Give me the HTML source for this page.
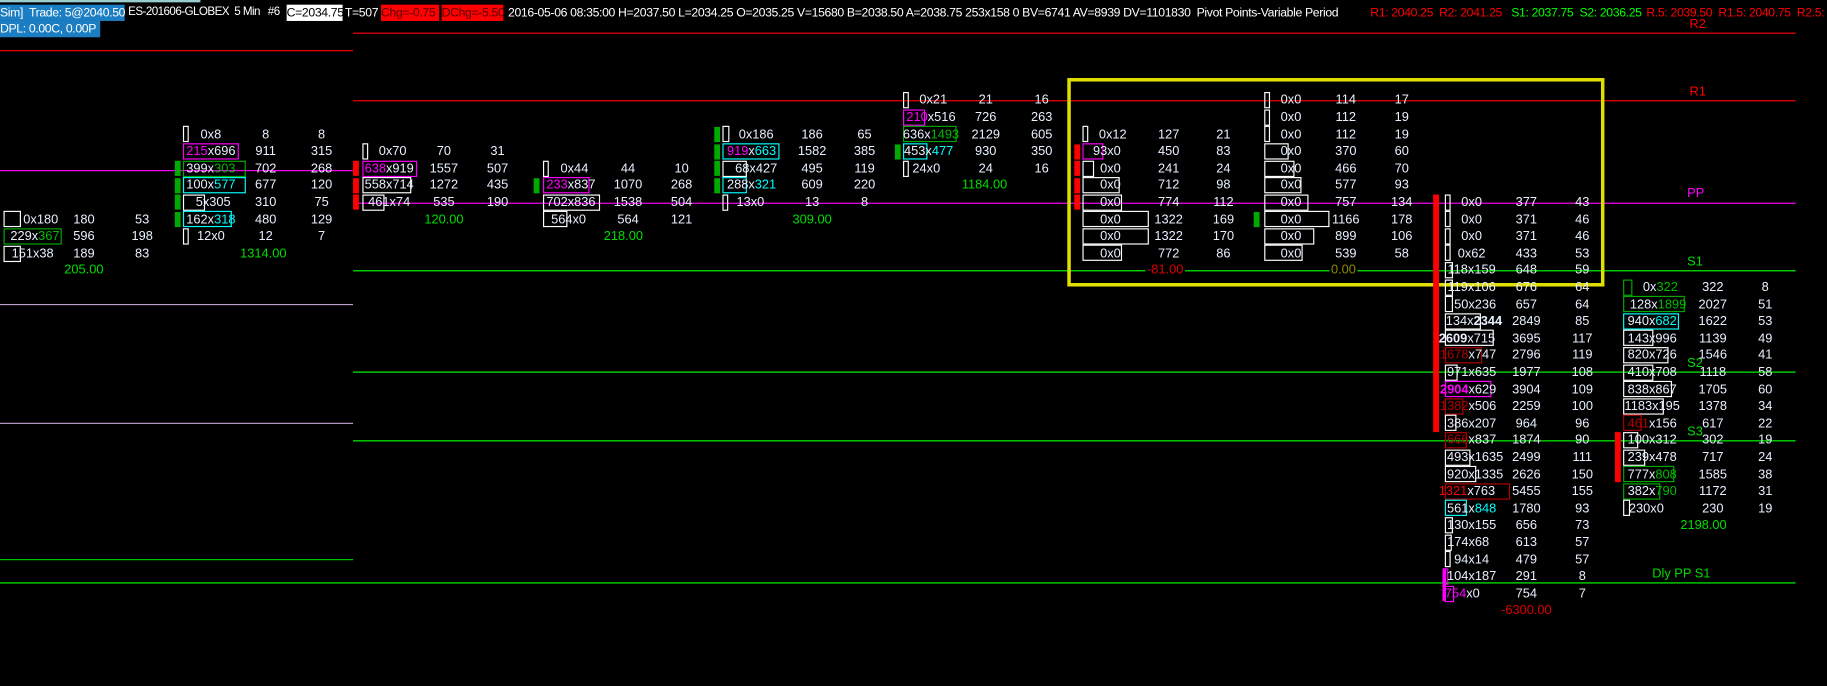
<!DOCTYPE html>
<html><head><meta charset="utf-8"><style>
html,body{margin:0;padding:0;background:#000;overflow:hidden;width:1827px;height:686px}
#s{position:absolute;left:0;top:0;width:1568px;height:589px;transform-origin:0 0;transform:scale(1.16518,1.16469);font-family:"Liberation Sans",sans-serif;font-size:11px;color:#fff}
#s div{position:absolute}
.h{top:4px;height:14px;line-height:14px;white-space:nowrap;font-size:10.5px;letter-spacing:-0.3px}
.l{height:1px}
.t{width:70px;margin-left:-35px;text-align:center;line-height:14px;height:14px;white-space:nowrap;color:#e8f0ff}
.b{height:12px;border:1px solid #fff;box-sizing:content-box}
.w{border-color:#fff}.m{border-color:#f0f}.c{border-color:#0ff}.g{border-color:#0a0}.r{border-color:#b00000}
.vr{width:5px;height:13px;background:#f00}.vg{width:5px;height:13px;background:#0a0}.vm{width:3px;height:13px;background:#f0f}
.M{color:#f0f}.C{color:#0ff}.G{color:#0b0}.R{color:#b00000}.RR{color:#f00}
.tot{color:#0d0}.lab{font-size:11px;line-height:12px}
</style></head><body><div id="s">
<div style="left:0;top:0;width:172px;height:2px;background:#9cc"></div>
<div class="h" style="left:0;width:107px;background:#1b7ec2">Sim]&nbsp; Trade: 5@2040.50</div>
<div class="h" style="left:110px;font-size:10px;letter-spacing:-0.5px">ES-201606-GLOBEX&nbsp; 5 Min&nbsp;&nbsp; #6</div>
<div class="h" style="left:246px;width:48px;background:#fff;color:#000">C=2034.75</div>
<div class="h" style="left:296px">T=507</div>
<div class="h" style="left:327px;width:50px;background:#f00;color:#500">Chg=-0.75</div>
<div class="h" style="left:379px;width:53px;background:#f00;color:#500">DChg=-5.50</div>
<div class="h" style="left:436px">2016-05-06 08:35:00 H=2037.50 L=2034.25 O=2035.25 V=15680 B=2038.50 A=2038.75 253x158 0 BV=6741 AV=8939 DV=1101830&nbsp; Pivot Points-Variable Period</div>
<div class="h" style="left:1176px;color:#f00">R1: 2040.25&nbsp; R2: 2041.25</div>
<div class="h" style="left:1297px;color:#0f0">S1: 2037.75&nbsp; S2: 2036.25</div>
<div class="h" style="left:1413px;color:#f00">R.5: 2039.50&nbsp; R1.5: 2040.75&nbsp; R2.5: 2042.00&nbsp; R3: 20</div>
<div class="h" style="left:0;top:18px;width:86px;background:#1b7ec2">DPL: 0.00C, 0.00P</div>

<div class="l" style="left:0;top:43px;width:303px;background:#f00"></div>
<div class="l" style="left:303px;top:28px;width:1238px;background:#f00"></div>
<div class="l" style="left:0;top:146px;width:303px;background:#f0f"></div>
<div class="l" style="left:0;top:261px;width:303px;background:#b8a0c8"></div>
<div class="l" style="left:0;top:363px;width:303px;background:#b8a0c8"></div>
<div class="l" style="left:0;top:480px;width:303px;background:#0c0"></div>
<div class="l" style="left:303px;top:86px;width:1238px;background:#f00"></div>
<div class="l" style="left:303px;top:174px;width:1238px;background:#f0f"></div>
<div class="l" style="left:303px;top:232px;width:1238px;background:#0f0"></div>
<div class="l" style="left:303px;top:319px;width:1238px;background:#0f0"></div>
<div class="l" style="left:303px;top:378px;width:1238px;background:#0f0"></div>
<div class="l" style="left:0;top:500px;width:1541px;background:#0f0"></div>
<div class="lab" style="left:1450px;top:15px;color:#f00">R2</div>
<div class="lab" style="left:1450px;top:73px;color:#f00">R1</div>
<div class="lab" style="left:1448px;top:160px;color:#f0f">PP</div>
<div class="lab" style="left:1448px;top:219px;color:#0d0">S1</div>
<div class="lab" style="left:1448px;top:306px;color:#0d0">S2</div>
<div class="lab" style="left:1448px;top:365px;color:#0d0">S3</div>
<div class="lab" style="left:1418px;top:487px;color:#0d0">Dly PP S1</div>
<div style="left:916px;top:67px;width:455px;height:173px;border:3px solid #e0e000"></div>

<!-- Bar A -->
<div class="b w" style="left:3px;top:181px;width:13px"></div>
<div class="b g" style="left:3px;top:196px;width:48px"></div>
<div class="b w" style="left:3px;top:211px;width:13px"></div>
<div class="t" style="left:35px;top:181.6px">0x180</div><div class="t" style="left:72px;top:181.6px">180</div><div class="t" style="left:122px;top:181.6px">53</div>
<div class="t" style="left:30px;top:196.2px">229x<span class="G">367</span></div><div class="t" style="left:72px;top:196.2px">596</div><div class="t" style="left:122px;top:196.2px">198</div>
<div class="t" style="left:28px;top:210.8px">151x38</div><div class="t" style="left:72px;top:210.8px">189</div><div class="t" style="left:122px;top:210.8px">83</div>
<div class="t tot" style="left:72px;top:225.4px">205.00</div>

<!-- Bar B -->
<div class="vg" style="left:150px;top:138px"></div><div class="vg" style="left:150px;top:153px"></div><div class="vg" style="left:150px;top:167px"></div><div class="vg" style="left:150px;top:182px"></div>
<div class="b w" style="left:157px;top:108px;width:3px"></div>
<div class="b m" style="left:157px;top:123px;width:46px"></div>
<div class="b g" style="left:157px;top:138px;width:52px"></div>
<div class="b c" style="left:157px;top:152px;width:52px"></div>
<div class="b w" style="left:157px;top:167px;width:17px"></div>
<div class="b c" style="left:157px;top:181px;width:40px"></div>
<div class="b w" style="left:157px;top:196px;width:3px"></div>
<div class="t" style="left:181px;top:108.6px">0x8</div><div class="t" style="left:228px;top:108.6px">8</div><div class="t" style="left:276px;top:108.6px">8</div>
<div class="t" style="left:181px;top:123.2px"><span class="M">215</span>x696</div><div class="t" style="left:228px;top:123.2px">911</div><div class="t" style="left:276px;top:123.2px">315</div>
<div class="t" style="left:181px;top:137.8px">399x<span class="G">303</span></div><div class="t" style="left:228px;top:137.8px">702</div><div class="t" style="left:276px;top:137.8px">268</div>
<div class="t" style="left:181px;top:152.4px">100x<span class="C">577</span></div><div class="t" style="left:228px;top:152.4px">677</div><div class="t" style="left:276px;top:152.4px">120</div>
<div class="t" style="left:183px;top:167px">5x305</div><div class="t" style="left:228px;top:167px">310</div><div class="t" style="left:276px;top:167px">75</div>
<div class="t" style="left:181px;top:181.6px">162x<span class="C">318</span></div><div class="t" style="left:228px;top:181.6px">480</div><div class="t" style="left:276px;top:181.6px">129</div>
<div class="t" style="left:181px;top:196.2px">12x0</div><div class="t" style="left:228px;top:196.2px">12</div><div class="t" style="left:276px;top:196.2px">7</div>
<div class="t tot" style="left:226px;top:210.8px">1314.00</div>

<!-- Bar C -->
<div class="vr" style="left:303px;top:138px"></div><div class="vr" style="left:303px;top:153px"></div><div class="vr" style="left:303px;top:167px"></div>
<div class="b w" style="left:311px;top:123px;width:3px"></div>
<div class="b m" style="left:311px;top:138px;width:45px"></div>
<div class="b w" style="left:311px;top:152px;width:40px"></div>
<div class="b w" style="left:311px;top:167px;width:17px"></div>
<div class="t" style="left:337px;top:123.2px">0x70</div><div class="t" style="left:381px;top:123.2px">70</div><div class="t" style="left:427px;top:123.2px">31</div>
<div class="t" style="left:334px;top:137.8px"><span class="M">638</span>x919</div><div class="t" style="left:381px;top:137.8px">1557</div><div class="t" style="left:427px;top:137.8px">507</div>
<div class="t" style="left:334px;top:152.4px">558x714</div><div class="t" style="left:381px;top:152.4px">1272</div><div class="t" style="left:427px;top:152.4px">435</div>
<div class="t" style="left:334px;top:167px">461x74</div><div class="t" style="left:381px;top:167px">535</div><div class="t" style="left:427px;top:167px">190</div>
<div class="t tot" style="left:381px;top:181.6px">120.00</div>

<!-- Bar D -->
<div class="vg" style="left:458px;top:153px"></div>
<div class="b w" style="left:466px;top:138px;width:3px"></div>
<div class="b m" style="left:466px;top:152px;width:38px"></div>
<div class="b w" style="left:466px;top:167px;width:47px"></div>
<div class="b w" style="left:466px;top:181px;width:19px"></div>
<div class="t" style="left:493px;top:137.8px">0x44</div><div class="t" style="left:539px;top:137.8px">44</div><div class="t" style="left:585px;top:137.8px">10</div>
<div class="t" style="left:490px;top:152.4px"><span class="M">233</span>x837</div><div class="t" style="left:539px;top:152.4px">1070</div><div class="t" style="left:585px;top:152.4px">268</div>
<div class="t" style="left:490px;top:167px">702x836</div><div class="t" style="left:539px;top:167px">1538</div><div class="t" style="left:585px;top:167px">504</div>
<div class="t" style="left:488px;top:181.6px">564x0</div><div class="t" style="left:539px;top:181.6px">564</div><div class="t" style="left:585px;top:181.6px">121</div>
<div class="t tot" style="left:535px;top:196.2px">218.00</div>

<!-- Bar E -->
<div class="vg" style="left:613px;top:109px"></div><div class="vg" style="left:613px;top:124px"></div><div class="vg" style="left:613px;top:138px"></div><div class="vg" style="left:613px;top:153px"></div>
<div class="b w" style="left:620px;top:108px;width:4px"></div>
<div class="b c" style="left:620px;top:123px;width:47px"></div>
<div class="b w" style="left:620px;top:138px;width:19px"></div>
<div class="b c" style="left:620px;top:152px;width:19px"></div>
<div class="b w" style="left:620px;top:167px;width:3px"></div>
<div class="t" style="left:649px;top:108.6px">0x186</div><div class="t" style="left:697px;top:108.6px">186</div><div class="t" style="left:742px;top:108.6px">65</div>
<div class="t" style="left:645px;top:123.2px"><span class="M">919</span>x<span class="C">663</span></div><div class="t" style="left:697px;top:123.2px">1582</div><div class="t" style="left:742px;top:123.2px">385</div>
<div class="t" style="left:649px;top:137.8px">68x427</div><div class="t" style="left:697px;top:137.8px">495</div><div class="t" style="left:742px;top:137.8px">119</div>
<div class="t" style="left:645px;top:152.4px">288x<span class="C">321</span></div><div class="t" style="left:697px;top:152.4px">609</div><div class="t" style="left:742px;top:152.4px">220</div>
<div class="t" style="left:644px;top:167px">13x0</div><div class="t" style="left:697px;top:167px">13</div><div class="t" style="left:742px;top:167px">8</div>
<div class="t tot" style="left:697px;top:181.6px">309.00</div>

<!-- Bar F -->
<div class="vg" style="left:768px;top:124px"></div>
<div class="b w" style="left:775px;top:79px;width:3px"></div>
<div class="b m" style="left:775px;top:94px;width:17px"></div>
<div class="b g" style="left:775px;top:108px;width:44px"></div>
<div class="b c" style="left:775px;top:123px;width:19px"></div>
<div class="b w" style="left:775px;top:138px;width:3px"></div>
<div class="t" style="left:801px;top:79.4px">0x21</div><div class="t" style="left:846px;top:79.4px">21</div><div class="t" style="left:894px;top:79.4px">16</div>
<div class="t" style="left:799px;top:94px"><span class="M">210</span>x516</div><div class="t" style="left:846px;top:94px">726</div><div class="t" style="left:894px;top:94px">263</div>
<div class="t" style="left:799px;top:108.6px">636x<span class="G">1493</span></div><div class="t" style="left:846px;top:108.6px">2129</div><div class="t" style="left:894px;top:108.6px">605</div>
<div class="t" style="left:797px;top:123.2px">453x<span class="C">477</span></div><div class="t" style="left:846px;top:123.2px">930</div><div class="t" style="left:894px;top:123.2px">350</div>
<div class="t" style="left:795px;top:137.8px">24x0</div><div class="t" style="left:846px;top:137.8px">24</div><div class="t" style="left:894px;top:137.8px">16</div>
<div class="t tot" style="left:845px;top:152.4px">1184.00</div>

<!-- Bar G -->
<div class="vr" style="left:922px;top:124px"></div><div class="vr" style="left:922px;top:138px"></div><div class="vr" style="left:922px;top:153px"></div><div class="vr" style="left:922px;top:167px"></div>
<div class="b w" style="left:929px;top:108px;width:3px"></div>
<div class="b m" style="left:929px;top:123px;width:16px"></div>
<div class="b w" style="left:929px;top:138px;width:8px"></div>
<div class="b w" style="left:929px;top:152px;width:30px"></div>
<div class="b w" style="left:929px;top:167px;width:32px"></div>
<div class="b w" style="left:929px;top:181px;width:55px"></div>
<div class="b w" style="left:929px;top:196px;width:55px"></div>
<div class="b w" style="left:929px;top:210px;width:32px"></div>
<div class="t" style="left:955px;top:108.6px">0x12</div><div class="t" style="left:1003px;top:108.6px">127</div><div class="t" style="left:1050px;top:108.6px">21</div>
<div class="t" style="left:950px;top:123.2px">93x0</div><div class="t" style="left:1003px;top:123.2px">450</div><div class="t" style="left:1050px;top:123.2px">83</div>
<div class="t" style="left:953px;top:137.8px">0x0</div><div class="t" style="left:1003px;top:137.8px">241</div><div class="t" style="left:1050px;top:137.8px">24</div>
<div class="t" style="left:953px;top:152.4px">0x0</div><div class="t" style="left:1003px;top:152.4px">712</div><div class="t" style="left:1050px;top:152.4px">98</div>
<div class="t" style="left:953px;top:167px">0x0</div><div class="t" style="left:1003px;top:167px">774</div><div class="t" style="left:1050px;top:167px">112</div>
<div class="t" style="left:953px;top:181.6px">0x0</div><div class="t" style="left:1003px;top:181.6px">1322</div><div class="t" style="left:1050px;top:181.6px">169</div>
<div class="t" style="left:953px;top:196.2px">0x0</div><div class="t" style="left:1003px;top:196.2px">1322</div><div class="t" style="left:1050px;top:196.2px">170</div>
<div class="t" style="left:953px;top:210.8px">0x0</div><div class="t" style="left:1003px;top:210.8px">772</div><div class="t" style="left:1050px;top:210.8px">86</div>
<div class="t" style="left:1000px;top:225.4px;color:#e00000;background:#000;width:34px;margin-left:-17px">-81.00</div>

<!-- Bar H -->
<div class="vg" style="left:1076px;top:182px"></div>
<div class="b w" style="left:1085px;top:79px;width:3px"></div>
<div class="b w" style="left:1085px;top:94px;width:3px"></div>
<div class="b w" style="left:1085px;top:108px;width:3px"></div>
<div class="b w" style="left:1085px;top:123px;width:19px"></div>
<div class="b w" style="left:1085px;top:138px;width:24px"></div>
<div class="b w" style="left:1085px;top:152px;width:30px"></div>
<div class="b w" style="left:1085px;top:167px;width:36px"></div>
<div class="b w" style="left:1085px;top:181px;width:54px"></div>
<div class="b w" style="left:1085px;top:196px;width:41px"></div>
<div class="b w" style="left:1085px;top:210px;width:31px"></div>
<div class="t" style="left:1108px;top:79.4px">0x0</div><div class="t" style="left:1155px;top:79.4px">114</div><div class="t" style="left:1203px;top:79.4px">17</div>
<div class="t" style="left:1108px;top:94px">0x0</div><div class="t" style="left:1155px;top:94px">112</div><div class="t" style="left:1203px;top:94px">19</div>
<div class="t" style="left:1108px;top:108.6px">0x0</div><div class="t" style="left:1155px;top:108.6px">112</div><div class="t" style="left:1203px;top:108.6px">19</div>
<div class="t" style="left:1108px;top:123.2px">0x0</div><div class="t" style="left:1155px;top:123.2px">370</div><div class="t" style="left:1203px;top:123.2px">60</div>
<div class="t" style="left:1108px;top:137.8px">0x0</div><div class="t" style="left:1155px;top:137.8px">466</div><div class="t" style="left:1203px;top:137.8px">70</div>
<div class="t" style="left:1108px;top:152.4px">0x0</div><div class="t" style="left:1155px;top:152.4px">577</div><div class="t" style="left:1203px;top:152.4px">93</div>
<div class="t" style="left:1108px;top:167px">0x0</div><div class="t" style="left:1155px;top:167px">757</div><div class="t" style="left:1203px;top:167px">134</div>
<div class="t" style="left:1108px;top:181.6px">0x0</div><div class="t" style="left:1155px;top:181.6px">1166</div><div class="t" style="left:1203px;top:181.6px">178</div>
<div class="t" style="left:1108px;top:196.2px">0x0</div><div class="t" style="left:1155px;top:196.2px">899</div><div class="t" style="left:1203px;top:196.2px">106</div>
<div class="t" style="left:1108px;top:210.8px">0x0</div><div class="t" style="left:1155px;top:210.8px">539</div><div class="t" style="left:1203px;top:210.8px">58</div>
<div class="t" style="left:1153px;top:225.4px;color:#8a8a00;background:#000;width:24px;margin-left:-12px">0.00</div>

<!-- Bar I -->
<div class="vr" style="left:1230px;top:167px;height:204px"></div>
<div class="vm" style="left:1238px;top:488px;height:28px"></div>
<div class="b w" style="left:1240px;top:167px;width:3px"></div>
<div class="b w" style="left:1240px;top:181px;width:3px"></div>
<div class="b w" style="left:1240px;top:196px;width:3px"></div>
<div class="b w" style="left:1240px;top:210px;width:3px"></div>
<div class="b w" style="left:1240px;top:225px;width:5px"></div>
<div class="b w" style="left:1240px;top:240px;width:5px"></div>
<div class="b w" style="left:1240px;top:254px;width:5px"></div>
<div class="b w" style="left:1240px;top:269px;width:29px"></div>
<div class="b w" style="left:1240px;top:283px;width:40px"></div>
<div class="b r" style="left:1240px;top:298px;width:30px"></div>
<div class="b w" style="left:1240px;top:313px;width:9px"></div>
<div class="b m" style="left:1240px;top:327px;width:38px"></div>
<div class="b r" style="left:1240px;top:342px;width:14px"></div>
<div class="b w" style="left:1240px;top:356px;width:8px"></div>
<div class="b r" style="left:1240px;top:371px;width:17px"></div>
<div class="b w" style="left:1240px;top:386px;width:20px"></div>
<div class="b w" style="left:1240px;top:400px;width:25px"></div>
<div class="b r" style="left:1240px;top:415px;width:54px"></div>
<div class="b c" style="left:1240px;top:429px;width:17px"></div>
<div class="b w" style="left:1240px;top:444px;width:5px"></div>
<div class="b w" style="left:1240px;top:459px;width:4px"></div>
<div class="b w" style="left:1240px;top:473px;width:3px"></div>
<div class="b m" style="left:1240px;top:488px;width:1px"></div>
<div class="b m" style="left:1240px;top:503px;width:6px"></div>
<div class="t" style="left:1263px;top:167px">0x0</div><div class="t" style="left:1310px;top:167px">377</div><div class="t" style="left:1358px;top:167px">43</div>
<div class="t" style="left:1263px;top:181.6px">0x0</div><div class="t" style="left:1310px;top:181.6px">371</div><div class="t" style="left:1358px;top:181.6px">46</div>
<div class="t" style="left:1263px;top:196.2px">0x0</div><div class="t" style="left:1310px;top:196.2px">371</div><div class="t" style="left:1358px;top:196.2px">46</div>
<div class="t" style="left:1263px;top:210.8px">0x62</div><div class="t" style="left:1310px;top:210.8px">433</div><div class="t" style="left:1358px;top:210.8px">53</div>
<div class="t" style="left:1263px;top:225.4px">118x159</div><div class="t" style="left:1310px;top:225.4px">648</div><div class="t" style="left:1358px;top:225.4px">59</div>
<div class="t" style="left:1263px;top:240px">119x106</div><div class="t" style="left:1310px;top:240px">676</div><div class="t" style="left:1358px;top:240px">64</div>
<div class="t" style="left:1266px;top:254.6px">50x236</div><div class="t" style="left:1310px;top:254.6px">657</div><div class="t" style="left:1358px;top:254.6px">64</div>
<div class="t" style="left:1265px;top:269.2px">134x<b>2344</b></div><div class="t" style="left:1310px;top:269.2px">2849</div><div class="t" style="left:1358px;top:269.2px">85</div>
<div class="t" style="left:1259px;top:283.8px"><b>2609</b>x715</div><div class="t" style="left:1310px;top:283.8px">3695</div><div class="t" style="left:1358px;top:283.8px">117</div>
<div class="t" style="left:1260px;top:298.4px"><span class="R">1678</span>x747</div><div class="t" style="left:1310px;top:298.4px">2796</div><div class="t" style="left:1358px;top:298.4px">119</div>
<div class="t" style="left:1263px;top:313px">971x635</div><div class="t" style="left:1310px;top:313px">1977</div><div class="t" style="left:1358px;top:313px">108</div>
<div class="t" style="left:1260px;top:327.6px"><b class="M">2904</b>x629</div><div class="t" style="left:1310px;top:327.6px">3904</div><div class="t" style="left:1358px;top:327.6px">109</div>
<div class="t" style="left:1260px;top:342.2px"><span class="R">1382</span>x506</div><div class="t" style="left:1310px;top:342.2px">2259</div><div class="t" style="left:1358px;top:342.2px">100</div>
<div class="t" style="left:1263px;top:356.8px">386x207</div><div class="t" style="left:1310px;top:356.8px">964</div><div class="t" style="left:1358px;top:356.8px">96</div>
<div class="t" style="left:1263px;top:371.4px"><span class="R">666</span>x837</div><div class="t" style="left:1310px;top:371.4px">1874</div><div class="t" style="left:1358px;top:371.4px">90</div>
<div class="t" style="left:1266px;top:386px">493x1635</div><div class="t" style="left:1310px;top:386px">2499</div><div class="t" style="left:1358px;top:386px">111</div>
<div class="t" style="left:1266px;top:400.6px">920x1335</div><div class="t" style="left:1310px;top:400.6px">2626</div><div class="t" style="left:1358px;top:400.6px">150</div>
<div class="t" style="left:1259px;top:415.2px"><span class="RR">1321</span>x763</div><div class="t" style="left:1310px;top:415.2px">5455</div><div class="t" style="left:1358px;top:415.2px">155</div>
<div class="t" style="left:1263px;top:429.8px">561x<span class="C">848</span></div><div class="t" style="left:1310px;top:429.8px">1780</div><div class="t" style="left:1358px;top:429.8px">93</div>
<div class="t" style="left:1263px;top:444.4px">130x155</div><div class="t" style="left:1310px;top:444.4px">656</div><div class="t" style="left:1358px;top:444.4px">73</div>
<div class="t" style="left:1260px;top:459px">174x68</div><div class="t" style="left:1310px;top:459px">613</div><div class="t" style="left:1358px;top:459px">57</div>
<div class="t" style="left:1263px;top:473.6px">94x14</div><div class="t" style="left:1310px;top:473.6px">479</div><div class="t" style="left:1358px;top:473.6px">57</div>
<div class="t" style="left:1263px;top:488.2px">104x187</div><div class="t" style="left:1310px;top:488.2px">291</div><div class="t" style="left:1358px;top:488.2px">8</div>
<div class="t" style="left:1255px;top:502.8px"><span class="M">754</span>x0</div><div class="t" style="left:1310px;top:502.8px">754</div><div class="t" style="left:1358px;top:502.8px">7</div>
<div class="t" style="left:1310px;top:517.4px;color:#e00000">-6300.00</div>

<!-- Bar J -->
<div class="vr" style="left:1386px;top:371px;height:43px"></div>
<div class="b g" style="left:1393px;top:240px;width:6px"></div>
<div class="b g" style="left:1393px;top:254px;width:51px"></div>
<div class="b c" style="left:1393px;top:269px;width:46px"></div>
<div class="b w" style="left:1393px;top:283px;width:24px"></div>
<div class="b w" style="left:1393px;top:298px;width:37px"></div>
<div class="b w" style="left:1393px;top:313px;width:24px"></div>
<div class="b w" style="left:1393px;top:327px;width:40px"></div>
<div class="b w" style="left:1393px;top:342px;width:33px"></div>
<div class="b r" style="left:1393px;top:356px;width:14px"></div>
<div class="b w" style="left:1393px;top:371px;width:11px"></div>
<div class="b w" style="left:1393px;top:386px;width:17px"></div>
<div class="b g" style="left:1393px;top:400px;width:42px"></div>
<div class="b g" style="left:1393px;top:415px;width:30px"></div>
<div class="b w" style="left:1393px;top:429px;width:4px"></div>
<div class="t" style="left:1425px;top:240px">0x<span class="G">322</span></div><div class="t" style="left:1470px;top:240px">322</div><div class="t" style="left:1515px;top:240px">8</div>
<div class="t" style="left:1423px;top:254.6px">128x<span class="G">1899</span></div><div class="t" style="left:1470px;top:254.6px">2027</div><div class="t" style="left:1515px;top:254.6px">51</div>
<div class="t" style="left:1418px;top:269.2px">940x<span class="C">682</span></div><div class="t" style="left:1470px;top:269.2px">1622</div><div class="t" style="left:1515px;top:269.2px">53</div>
<div class="t" style="left:1418px;top:283.8px">143x996</div><div class="t" style="left:1470px;top:283.8px">1139</div><div class="t" style="left:1515px;top:283.8px">49</div>
<div class="t" style="left:1418px;top:298.4px">820x726</div><div class="t" style="left:1470px;top:298.4px">1546</div><div class="t" style="left:1515px;top:298.4px">41</div>
<div class="t" style="left:1418px;top:313px">410x708</div><div class="t" style="left:1470px;top:313px">1118</div><div class="t" style="left:1515px;top:313px">58</div>
<div class="t" style="left:1418px;top:327.6px">838x867</div><div class="t" style="left:1470px;top:327.6px">1705</div><div class="t" style="left:1515px;top:327.6px">60</div>
<div class="t" style="left:1418px;top:342.2px">1183x195</div><div class="t" style="left:1470px;top:342.2px">1378</div><div class="t" style="left:1515px;top:342.2px">34</div>
<div class="t" style="left:1418px;top:356.8px"><span class="R">461</span>x156</div><div class="t" style="left:1470px;top:356.8px">617</div><div class="t" style="left:1515px;top:356.8px">22</div>
<div class="t" style="left:1418px;top:371.4px">100x312</div><div class="t" style="left:1470px;top:371.4px">302</div><div class="t" style="left:1515px;top:371.4px">19</div>
<div class="t" style="left:1418px;top:386px">239x478</div><div class="t" style="left:1470px;top:386px">717</div><div class="t" style="left:1515px;top:386px">24</div>
<div class="t" style="left:1418px;top:400.6px">777x<span class="G">808</span></div><div class="t" style="left:1470px;top:400.6px">1585</div><div class="t" style="left:1515px;top:400.6px">38</div>
<div class="t" style="left:1418px;top:415.2px">382x<span class="G">790</span></div><div class="t" style="left:1470px;top:415.2px">1172</div><div class="t" style="left:1515px;top:415.2px">31</div>
<div class="t" style="left:1413px;top:429.8px">230x0</div><div class="t" style="left:1470px;top:429.8px">230</div><div class="t" style="left:1515px;top:429.8px">19</div>
<div class="t tot" style="left:1462px;top:444.4px">2198.00</div>
</div></body></html>
